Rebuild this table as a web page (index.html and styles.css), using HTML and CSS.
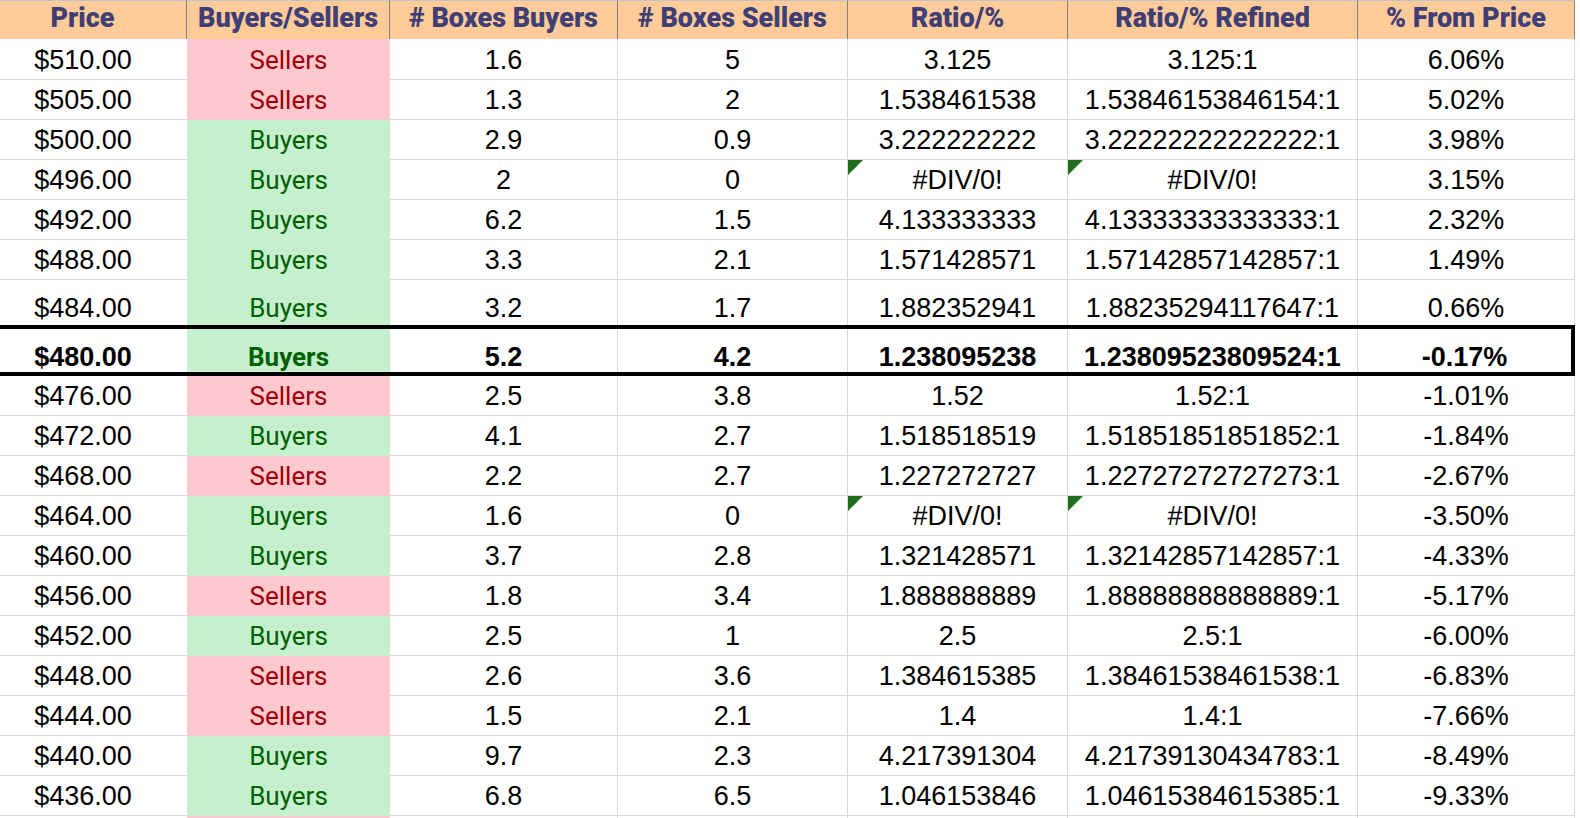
FILE: index.html
```html
<!DOCTYPE html>
<html lang="en">
<head>
<meta charset="utf-8">
<title>Buyers/Sellers Ratio</title>
<link rel="stylesheet" href="styles.css">
</head>
<body>
<div class="sheet">
  <div class="row head">
    <div class="c c1">Price</div>
    <div class="c c2">Buyers/Sellers</div>
    <div class="c c3"># Boxes Buyers</div>
    <div class="c c4"># Boxes Sellers</div>
    <div class="c c5">Ratio/%</div>
    <div class="c c6">Ratio/% Refined</div>
    <div class="c c7">% From Price</div>
  </div>
  <div class="row first"><div class="c c1">$510.00</div><div class="c c2 sell">Sellers</div><div class="c c3">1.6</div><div class="c c4">5</div><div class="c c5">3.125</div><div class="c c6">3.125:1</div><div class="c c7">6.06%</div></div>
  <div class="row"><div class="c c1">$505.00</div><div class="c c2 sell">Sellers</div><div class="c c3">1.3</div><div class="c c4">2</div><div class="c c5">1.538461538</div><div class="c c6">1.53846153846154:1</div><div class="c c7">5.02%</div></div>
  <div class="row"><div class="c c1">$500.00</div><div class="c c2 buy">Buyers</div><div class="c c3">2.9</div><div class="c c4">0.9</div><div class="c c5">3.222222222</div><div class="c c6">3.22222222222222:1</div><div class="c c7">3.98%</div></div>
  <div class="row"><div class="c c1">$496.00</div><div class="c c2 buy">Buyers</div><div class="c c3">2</div><div class="c c4">0</div><div class="c c5 err">#DIV/0!</div><div class="c c6 err">#DIV/0!</div><div class="c c7">3.15%</div></div>
  <div class="row"><div class="c c1">$492.00</div><div class="c c2 buy">Buyers</div><div class="c c3">6.2</div><div class="c c4">1.5</div><div class="c c5">4.133333333</div><div class="c c6">4.13333333333333:1</div><div class="c c7">2.32%</div></div>
  <div class="row"><div class="c c1">$488.00</div><div class="c c2 buy">Buyers</div><div class="c c3">3.3</div><div class="c c4">2.1</div><div class="c c5">1.571428571</div><div class="c c6">1.57142857142857:1</div><div class="c c7">1.49%</div></div>
  <div class="row tall"><div class="c c1">$484.00</div><div class="c c2 buy">Buyers</div><div class="c c3">3.2</div><div class="c c4">1.7</div><div class="c c5">1.882352941</div><div class="c c6">1.88235294117647:1</div><div class="c c7">0.66%</div></div>
  <div class="row cur"><div class="c c1">$480.00</div><div class="c c2 buy">Buyers</div><div class="c c3">5.2</div><div class="c c4">4.2</div><div class="c c5">1.238095238</div><div class="c c6">1.23809523809524:1</div><div class="c c7">-0.17%</div></div>
  <div class="row"><div class="c c1">$476.00</div><div class="c c2 sell">Sellers</div><div class="c c3">2.5</div><div class="c c4">3.8</div><div class="c c5">1.52</div><div class="c c6">1.52:1</div><div class="c c7">-1.01%</div></div>
  <div class="row"><div class="c c1">$472.00</div><div class="c c2 buy">Buyers</div><div class="c c3">4.1</div><div class="c c4">2.7</div><div class="c c5">1.518518519</div><div class="c c6">1.51851851851852:1</div><div class="c c7">-1.84%</div></div>
  <div class="row"><div class="c c1">$468.00</div><div class="c c2 sell">Sellers</div><div class="c c3">2.2</div><div class="c c4">2.7</div><div class="c c5">1.227272727</div><div class="c c6">1.22727272727273:1</div><div class="c c7">-2.67%</div></div>
  <div class="row"><div class="c c1">$464.00</div><div class="c c2 buy">Buyers</div><div class="c c3">1.6</div><div class="c c4">0</div><div class="c c5 err">#DIV/0!</div><div class="c c6 err">#DIV/0!</div><div class="c c7">-3.50%</div></div>
  <div class="row"><div class="c c1">$460.00</div><div class="c c2 buy">Buyers</div><div class="c c3">3.7</div><div class="c c4">2.8</div><div class="c c5">1.321428571</div><div class="c c6">1.32142857142857:1</div><div class="c c7">-4.33%</div></div>
  <div class="row"><div class="c c1">$456.00</div><div class="c c2 sell">Sellers</div><div class="c c3">1.8</div><div class="c c4">3.4</div><div class="c c5">1.888888889</div><div class="c c6">1.88888888888889:1</div><div class="c c7">-5.17%</div></div>
  <div class="row"><div class="c c1">$452.00</div><div class="c c2 buy">Buyers</div><div class="c c3">2.5</div><div class="c c4">1</div><div class="c c5">2.5</div><div class="c c6">2.5:1</div><div class="c c7">-6.00%</div></div>
  <div class="row"><div class="c c1">$448.00</div><div class="c c2 sell">Sellers</div><div class="c c3">2.6</div><div class="c c4">3.6</div><div class="c c5">1.384615385</div><div class="c c6">1.38461538461538:1</div><div class="c c7">-6.83%</div></div>
  <div class="row"><div class="c c1">$444.00</div><div class="c c2 sell">Sellers</div><div class="c c3">1.5</div><div class="c c4">2.1</div><div class="c c5">1.4</div><div class="c c6">1.4:1</div><div class="c c7">-7.66%</div></div>
  <div class="row"><div class="c c1">$440.00</div><div class="c c2 buy">Buyers</div><div class="c c3">9.7</div><div class="c c4">2.3</div><div class="c c5">4.217391304</div><div class="c c6">4.21739130434783:1</div><div class="c c7">-8.49%</div></div>
  <div class="row"><div class="c c1">$436.00</div><div class="c c2 buy">Buyers</div><div class="c c3">6.8</div><div class="c c4">6.5</div><div class="c c5">1.046153846</div><div class="c c6">1.04615384615385:1</div><div class="c c7">-9.33%</div></div>
  <div class="row"><div class="c c1"></div><div class="c c2 sell"></div><div class="c c3"></div><div class="c c4"></div><div class="c c5"></div><div class="c c6"></div><div class="c c7"></div></div>
</div>
</body>
</html>
```

FILE: styles.css
```css
* {
  box-sizing: border-box;
  margin: 0;
  padding: 0;
}

html, body {
  width: 1580px;
  height: 818px;
  overflow: hidden;
  background: #ffffff;
}

body {
  font-family: "Liberation Sans", Arial, sans-serif;
  font-size: 27px;
  color: #000000;
}

.sheet {
  display: flex;
  flex-direction: column;
}

.row {
  display: flex;
  height: 40px;
  flex: none;
}

.row.first { height: 41px; }

.c {
  position: relative;
  display: flex;
  align-items: flex-end;
  justify-content: center;
  line-height: 27px;
  padding-bottom: 5px;
  white-space: nowrap;
  border-right: 1px solid #d9d9d9;
  border-bottom: 1px solid #d9d9d9;
}

.c1 { width: 187px; padding-right: 21px; border-right: none; }
.c2 { width: 203px; border-right: none; }
.c3 { width: 228px; }
.c4 { width: 230px; }
.c5 { width: 220px; }
.c6 { width: 290px; }
.c7 { width: 217px; }

/* header */
.row.head { height: 39px; }
.head .c {
  background: #ffcc99;
  color: #3f3f76;
  font-family: Roboto, "Liberation Sans", sans-serif;
  font-weight: 900;
  font-size: 27px;
  border-top: 1px solid #c4c4c4;
  border-bottom: none;
  border-right: 1px solid #7f7f7f;
  padding-bottom: 7px;
}
.head .c1 { width: 187px; }
.head .c2 { width: 203px; }

/* status cells */
.buy,
.sell {
  font-family: Roboto, "Liberation Sans", sans-serif;
  font-size: 26px;
}
.buy {
  background: #c6efce;
  color: #006100;
  border-bottom-color: #c6efce;
}
.sell {
  background: #ffc7ce;
  color: #9c0006;
  border-bottom-color: #ffc7ce;
}

/* error indicator triangle */
.err::before {
  content: "";
  position: absolute;
  left: 0;
  top: 0;
  width: 0;
  height: 0;
  border-top: 15px solid #1f6f1f;
  border-right: 15px solid transparent;
}

/* taller row above current price */
.row.tall { height: 45px; }
.row.tall .c {
  border-bottom: none;
  padding-bottom: 3px;
}

/* current price row */
.row.cur {
  height: 51px;
  width: 1575px;
  border-top: 4px solid #000000;
  border-bottom: 4px solid #000000;
  border-right: 4px solid #000000;
  font-weight: bold;
}
.row.cur .c {
  border-bottom: none;
  padding-bottom: 1px;
}
.row.cur .c7 {
  flex: 1;
  border-right: none;
}
```
